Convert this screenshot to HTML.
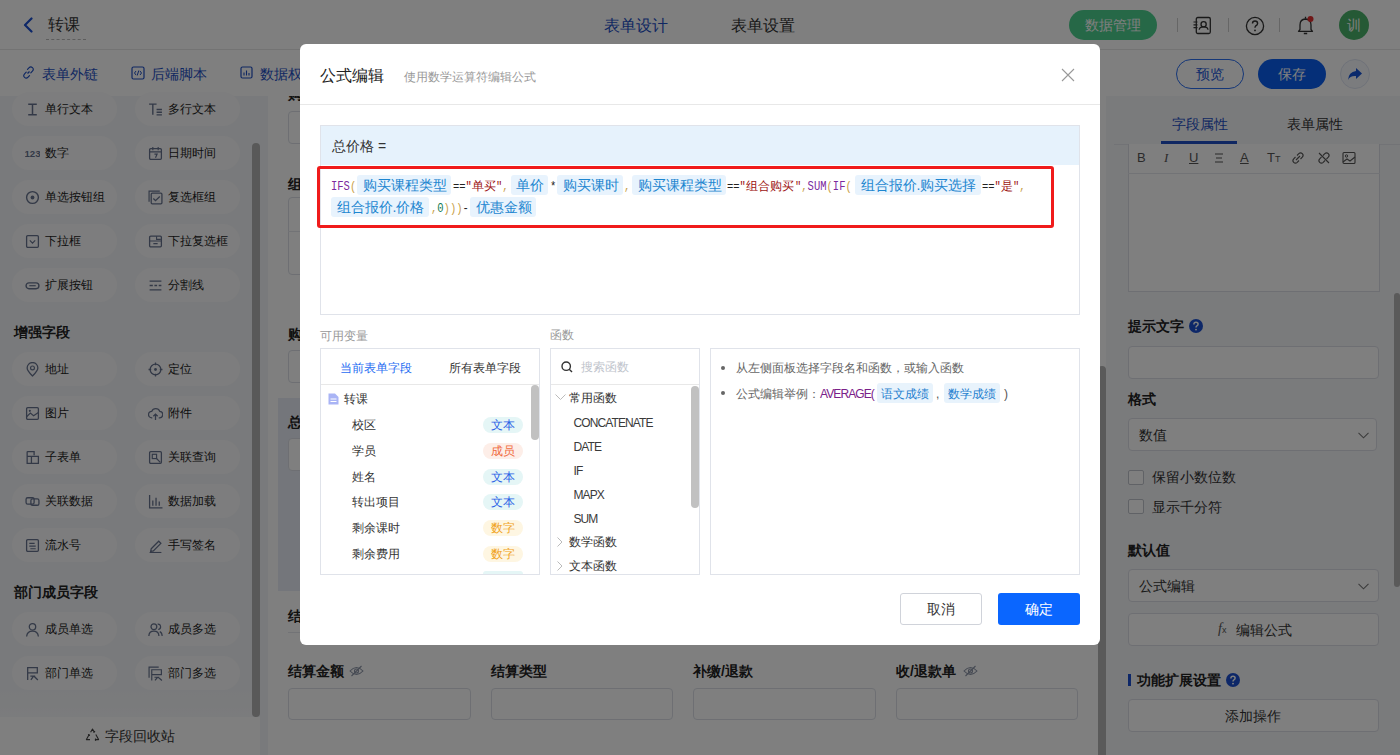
<!DOCTYPE html>
<html><head><meta charset="utf-8">
<style>
*{box-sizing:border-box;margin:0;padding:0}
html,body{width:1400px;height:755px;overflow:hidden;background:#fff;font-family:"Liberation Sans",sans-serif;color:#333;font-size:14px}
.a{position:absolute}
.t{position:absolute;white-space:nowrap;line-height:1}
/* header */
#hdr{left:0;top:0;width:1400px;height:50px;background:#fff;border-bottom:1px solid #e6e6e6}
#tb{left:0;top:50px;width:1400px;height:46px;background:#fff}
#side{left:0;top:96px;width:268px;height:659px;background:#f3f5f8}
.chip{position:absolute;width:105px;height:34px;border-radius:17px;background:#fbfbfc}
.chip .ic{position:absolute;left:13px;top:9.5px;width:15px;height:15px}
.chip .lb{position:absolute;left:33px;top:10px;font-size:12px;line-height:14px;color:#222;white-space:nowrap}
.sec{position:absolute;left:14px;font-size:14px;font-weight:bold;color:#222;line-height:14px}
#canvas{left:268px;top:96px;width:838px;height:659px;background:#fff}
.inp{position:absolute;border:1px solid #dcdfe6;border-radius:4px;background:#fff}
.flb{position:absolute;font-size:14px;font-weight:bold;color:#222;line-height:14px;white-space:nowrap}
#right{left:1106px;top:96px;width:294px;height:659px;background:#f5f6f9}
#ov{left:0;top:0;width:1400px;height:755px;background:rgba(0,0,0,.5)}
#modal{left:300px;top:44px;width:800px;height:601px;background:#fff;border-radius:6px}
</style></head><body>
<div id="hdr" class="a">
 <svg class="a" style="left:22px;top:17px" width="12" height="16" viewBox="0 0 12 16"><path d="M9.5 1.5 L3 8 L9.5 14.5" fill="none" stroke="#1a4fd0" stroke-width="2.2" stroke-linecap="round" stroke-linejoin="round"/></svg>
 <div class="t" style="left:48px;top:17px;font-size:16px;color:#333">转课</div>
 <div class="a" style="left:46px;top:39px;width:40px;border-top:1px dashed #bbb"></div>
 <div class="t" style="left:604px;top:18px;font-size:16px;color:#1e4fc4">表单设计</div>
 <div class="t" style="left:731px;top:18px;font-size:16px;color:#333">表单设置</div>
 <div class="a" style="left:1069px;top:10px;width:88px;height:30px;border-radius:15px;background:#4cd08f"></div>
 <div class="t" style="left:1085px;top:18px;font-size:14px;color:#fff">数据管理</div>
 <div class="a" style="left:1177px;top:18px;width:1px;height:14px;background:#ccc"></div>
 <div class="a" style="left:1228px;top:18px;width:1px;height:14px;background:#ccc"></div>
 <div class="a" style="left:1279px;top:18px;width:1px;height:14px;background:#ccc"></div>
 <svg class="a" style="left:1193px;top:16px" width="20" height="20" viewBox="0 0 20 20"><rect x="3.3" y="1.5" width="14" height="16" rx="1.5" fill="none" stroke="#333" stroke-width="1.3"/><circle cx="10.6" cy="8.2" r="2.6" fill="none" stroke="#333" stroke-width="1.3"/><path d="M6.2 13.8 Q6.5 10.9 10.6 10.9 Q14.7 10.9 15 13.8" fill="none" stroke="#333" stroke-width="1.3"/><path d="M0.5 6h4M0.5 8.8h4M0.5 11.6h4" stroke="#333" stroke-width="1.2"/></svg>
 <svg class="a" style="left:1245px;top:16px" width="20" height="20" viewBox="0 0 20 20"><circle cx="10" cy="10" r="8.6" fill="none" stroke="#333" stroke-width="1.3"/><path d="M7.5 7.6 Q7.5 5 10 5 Q12.6 5 12.6 7.4 Q12.6 9 10.6 10 Q10 10.4 10 11.8" fill="none" stroke="#333" stroke-width="1.4"/><circle cx="10" cy="14.4" r="0.9" fill="#333"/></svg>
 <svg class="a" style="left:1296px;top:15px" width="20" height="21" viewBox="0 0 20 21"><path d="M2.5 16.3 H16.5 L15 14.5 V10 Q15 4.3 9.5 4 Q4 4.3 4 10 V14.5 Z" fill="none" stroke="#333" stroke-width="1.3" stroke-linejoin="round"/><path d="M9.5 1.8v2M7.8 18.5h3.4" stroke="#333" stroke-width="1.3"/><circle cx="14.5" cy="4" r="3" fill="#e02e2e"/></svg>
 <div class="a" style="left:1339px;top:10px;width:30px;height:30px;border-radius:50%;background:#4ab26a"></div>
 <div class="t" style="left:1347px;top:18px;font-size:14px;color:#fff">训</div>
</div>
<div id="tb" class="a">
 <svg class="a" style="left:22px;top:16px" width="13" height="13" viewBox="0 0 13 13"><path d="M5.5 7.5 L7.5 5.5" stroke="#1e4fc4" stroke-width="1.2"/><path d="M4.2 6.2 L2.6 7.8 Q0.8 9.8 2.6 11.4 Q4.3 12.9 6.1 11.1 L7.5 9.7 M8.8 6.8 L10.4 5.2 Q12.2 3.2 10.4 1.6 Q8.7 0.1 6.9 1.9 L5.5 3.3" fill="none" stroke="#1e4fc4" stroke-width="1.2" stroke-linecap="round"/></svg>
 <div class="t" style="left:42px;top:17px;font-size:14px;color:#1e4fc4">表单外链</div>
 <svg class="a" style="left:131px;top:16px" width="14" height="14" viewBox="0 0 14 14"><rect x="1" y="1" width="12" height="12" rx="1.5" fill="none" stroke="#1e4fc4" stroke-width="1.2"/><path d="M5 5 L3.5 7 L5 9 M9 5 L10.5 7 L9 9 M7.8 4.5 L6.2 9.5" fill="none" stroke="#1e4fc4" stroke-width="1"/></svg>
 <div class="t" style="left:151px;top:17px;font-size:14px;color:#1e4fc4">后端脚本</div>
 <svg class="a" style="left:240px;top:16px" width="13" height="13" viewBox="0 0 13 13"><rect x="1" y="1" width="11" height="11" rx="1.5" fill="none" stroke="#1e4fc4" stroke-width="1.2"/><path d="M4 9.5V6.5M6.5 9.5V4.5M9 9.5V7" stroke="#1e4fc4" stroke-width="1.1"/></svg>
 <div class="t" style="left:260px;top:17px;font-size:14px;color:#1e4fc4">数据权限</div>
 <div class="a" style="left:1176px;top:9px;width:68px;height:30px;border-radius:15px;border:1px solid #2a6ef0;background:#fff"></div>
 <div class="t" style="left:1196px;top:17px;font-size:14px;color:#2558d8">预览</div>
 <div class="a" style="left:1258px;top:9px;width:68px;height:30px;border-radius:15px;background:#0a5ef0"></div>
 <div class="t" style="left:1278px;top:17px;font-size:14px;color:#fff">保存</div>
 <div class="a" style="left:1340px;top:9px;width:30px;height:30px;border-radius:50%;background:#f6f8fd;border:1px solid #dfe5f2"></div>
 <svg class="a" style="left:1346px;top:16px" width="18" height="16" viewBox="0 0 18 16"><path d="M10 2 L16 7.5 L10 13 L10 10 Q4 9.5 2 14 Q2.5 6 10 5 Z" fill="#1655d8"/></svg>
</div>
<div id="side" class="a">
 <div class="chip" style="left:12px;top:-4px"><svg class="ic" width="14" height="14" viewBox="0 0 14 14"><path d="M3 2h8M3 12h8M7 2v10" stroke="#67738f" stroke-width="1.4" fill="none"/></svg><div class="lb">单行文本</div></div>
 <div class="chip" style="left:135px;top:-4px"><svg class="ic" width="14" height="14" viewBox="0 0 14 14"><path d="M1 2h7M4.5 2v10M8 7h5M8 9.5h5M8 12h5" stroke="#67738f" stroke-width="1.3" fill="none"/></svg><div class="lb">多行文本</div></div>
 <div class="chip" style="left:12px;top:40px"><svg class="ic" width="14" height="14" viewBox="0 0 14 14"><text x="-0.5" y="10.5" font-size="9" font-weight="bold" font-family="Liberation Sans" fill="#67738f">123</text></svg><div class="lb">数字</div></div>
 <div class="chip" style="left:135px;top:40px"><svg class="ic" width="14" height="14" viewBox="0 0 14 14"><rect x="1.5" y="2.5" width="11" height="10" rx="1" fill="none" stroke="#67738f" stroke-width="1.2"/><path d="M1.5 5.5h11M4.5 1v3M9.5 1v3M6 7.5h2.5L7 11" stroke="#67738f" stroke-width="1.1" fill="none"/></svg><div class="lb">日期时间</div></div>
 <div class="chip" style="left:12px;top:84px"><svg class="ic" width="14" height="14" viewBox="0 0 14 14"><circle cx="7" cy="7" r="5.5" fill="none" stroke="#67738f" stroke-width="1.3"/><circle cx="7" cy="7" r="1.8" fill="#67738f"/></svg><div class="lb">单选按钮组</div></div>
 <div class="chip" style="left:135px;top:84px"><svg class="ic" width="14" height="14" viewBox="0 0 14 14"><path d="M1 11V1h10" stroke="#67738f" stroke-width="1.1" fill="none"/><rect x="3" y="3" width="10" height="10" rx="1" fill="none" stroke="#67738f" stroke-width="1.2"/><path d="M5 8l2 2 4-4" stroke="#67738f" stroke-width="1.2" fill="none"/></svg><div class="lb">复选框组</div></div>
 <div class="chip" style="left:12px;top:128px"><svg class="ic" width="14" height="14" viewBox="0 0 14 14"><rect x="1.5" y="1.5" width="11" height="11" rx="1" fill="none" stroke="#67738f" stroke-width="1.2"/><path d="M4.5 6l2.5 2.5L9.5 6" stroke="#67738f" stroke-width="1.1" fill="none"/></svg><div class="lb">下拉框</div></div>
 <div class="chip" style="left:135px;top:128px"><svg class="ic" width="14" height="14" viewBox="0 0 14 14"><rect x="1.5" y="2" width="11" height="10" rx="1" fill="none" stroke="#67738f" stroke-width="1.2"/><path d="M1.5 6.5h11M5 9h4" stroke="#67738f" stroke-width="1.1" fill="none"/><path d="M8 2v3h4" stroke="#67738f" stroke-width="1" fill="none"/></svg><div class="lb">下拉复选框</div></div>
 <div class="chip" style="left:12px;top:172px"><svg class="ic" width="14" height="14" viewBox="0 0 14 14"><rect x="1" y="4.5" width="12" height="5.5" rx="2.7" fill="none" stroke="#67738f" stroke-width="1.3"/><path d="M4 7.2h6" stroke="#67738f" stroke-width="1.1"/></svg><div class="lb">扩展按钮</div></div>
 <div class="chip" style="left:135px;top:172px"><svg class="ic" width="14" height="14" viewBox="0 0 14 14"><path d="M1.5 3h11M1.5 7h3M6 7h2.5M10 7h2.5M1.5 11h11" stroke="#67738f" stroke-width="1.2" fill="none"/></svg><div class="lb">分割线</div></div>
 <div class="chip" style="left:12px;top:256px"><svg class="ic" width="14" height="14" viewBox="0 0 14 14"><path d="M7 13 Q2 8 2 5.5 A5 5 0 0 1 12 5.5 Q12 8 7 13Z" fill="none" stroke="#67738f" stroke-width="1.2"/><circle cx="7" cy="5.5" r="1.8" fill="none" stroke="#67738f" stroke-width="1.1"/></svg><div class="lb">地址</div></div>
 <div class="chip" style="left:135px;top:256px"><svg class="ic" width="14" height="14" viewBox="0 0 14 14"><circle cx="7" cy="7" r="5" fill="none" stroke="#67738f" stroke-width="1.2"/><circle cx="7" cy="7" r="1.3" fill="#67738f"/><path d="M7 0.5v2.5M7 11v2.5M0.5 7h2.5M11 7h2.5" stroke="#67738f" stroke-width="1.2"/></svg><div class="lb">定位</div></div>
 <div class="chip" style="left:12px;top:300px"><svg class="ic" width="14" height="14" viewBox="0 0 14 14"><rect x="1.5" y="1.5" width="11" height="11" rx="1" fill="none" stroke="#67738f" stroke-width="1.2"/><path d="M1.5 10 L5 6.5 L8 9 L12.5 6" stroke="#67738f" stroke-width="1.1" fill="none"/><circle cx="4.5" cy="4.5" r="1" fill="#67738f"/></svg><div class="lb">图片</div></div>
 <div class="chip" style="left:135px;top:300px"><svg class="ic" width="14" height="14" viewBox="0 0 14 14"><path d="M4 11 H3.5 A3 3 0 0 1 3.5 5 A4 4 0 0 1 11 5 A3 3 0 0 1 10.5 11 H10" fill="none" stroke="#67738f" stroke-width="1.2"/><path d="M7 13V7.5M5 9.5l2-2 2 2" stroke="#67738f" stroke-width="1.2" fill="none"/></svg><div class="lb">附件</div></div>
 <div class="chip" style="left:12px;top:344px"><svg class="ic" width="14" height="14" viewBox="0 0 14 14"><path d="M2 1.5h6.5v3.5M2 1.5v11h10.5V6H6v6.5M2 6h4" stroke="#67738f" stroke-width="1.2" fill="none"/></svg><div class="lb">子表单</div></div>
 <div class="chip" style="left:135px;top:344px"><svg class="ic" width="14" height="14" viewBox="0 0 14 14"><rect x="1.5" y="1.5" width="11" height="11" rx="1" fill="none" stroke="#67738f" stroke-width="1.2"/><rect x="4" y="4" width="4" height="4" fill="none" stroke="#67738f" stroke-width="1.1"/><path d="M7.5 7.5l4 4" stroke="#67738f" stroke-width="1.1"/></svg><div class="lb">关联查询</div></div>
 <div class="chip" style="left:12px;top:388px"><svg class="ic" width="14" height="14" viewBox="0 0 14 14"><rect x="1" y="3.5" width="7.5" height="6" rx="1.5" fill="none" stroke="#67738f" stroke-width="1.2"/><rect x="5.5" y="4.5" width="7.5" height="6" rx="1.5" fill="none" stroke="#67738f" stroke-width="1.2"/></svg><div class="lb">关联数据</div></div>
 <div class="chip" style="left:135px;top:388px"><svg class="ic" width="14" height="14" viewBox="0 0 14 14"><path d="M1.5 1v12h12M4.5 11V6M7.5 11V3.5M10.5 11V7" stroke="#67738f" stroke-width="1.2" fill="none"/></svg><div class="lb">数据加载</div></div>
 <div class="chip" style="left:12px;top:432px"><svg class="ic" width="14" height="14" viewBox="0 0 14 14"><rect x="1.5" y="1.5" width="11" height="11" rx="1" fill="none" stroke="#67738f" stroke-width="1.2"/><path d="M4 5h5M4 7.5h6M5 10h5" stroke="#67738f" stroke-width="1.1"/></svg><div class="lb">流水号</div></div>
 <div class="chip" style="left:135px;top:432px"><svg class="ic" width="14" height="14" viewBox="0 0 14 14"><path d="M3 10 L10 3 L12 5 L5 12 L2.5 12.5Z" fill="none" stroke="#67738f" stroke-width="1.2"/><path d="M1.5 13.5h11" stroke="#67738f" stroke-width="1"/></svg><div class="lb">手写签名</div></div>
 <div class="chip" style="left:12px;top:516px"><svg class="ic" width="14" height="14" viewBox="0 0 14 14"><circle cx="7" cy="4.5" r="3" fill="none" stroke="#67738f" stroke-width="1.2"/><path d="M1.5 13.5 Q2 8.5 7 8.5 Q12 8.5 12.5 13.5" fill="none" stroke="#67738f" stroke-width="1.2"/></svg><div class="lb">成员单选</div></div>
 <div class="chip" style="left:135px;top:516px"><svg class="ic" width="14" height="14" viewBox="0 0 14 14"><circle cx="5.5" cy="4.5" r="2.7" fill="none" stroke="#67738f" stroke-width="1.2"/><path d="M0.8 13 Q1 8.5 5.5 8.5 Q10 8.5 10.2 13" fill="none" stroke="#67738f" stroke-width="1.2"/><path d="M9 2 A2.5 2.5 0 0 1 9.5 7 M11 9 Q13.2 10 13.2 13" fill="none" stroke="#67738f" stroke-width="1.1"/></svg><div class="lb">成员多选</div></div>
 <div class="chip" style="left:12px;top:560px"><svg class="ic" width="14" height="14" viewBox="0 0 14 14"><path d="M2.5 13V1.5H11.5V6.5H2.5M5 9.5H9.5M5.5 13L8 9.5M8.5 9.5L12 13" stroke="#67738f" stroke-width="1.2" fill="none"/></svg><div class="lb">部门单选</div></div>
 <div class="chip" style="left:135px;top:560px"><svg class="ic" width="14" height="14" viewBox="0 0 14 14"><path d="M1 11V1H10" stroke="#67738f" stroke-width="1.1" fill="none"/><path d="M3.5 13.5V3.5H12.5V8H3.5M6 10.5H10.5M6.5 13.5L9 10.5M9.5 10.5L13 13.5" stroke="#67738f" stroke-width="1.1" fill="none"/></svg><div class="lb">部门多选</div></div>
 <div class="sec" style="top:229px">增强字段</div>
 <div class="sec" style="top:489px">部门成员字段</div>
 <div class="a" style="left:252px;top:47px;width:8px;height:574px;border-radius:4px;background:#b3b3b3"></div>
 <div class="a" style="left:0;top:591px;width:252px;height:30px;background:linear-gradient(rgba(255,255,255,0),rgba(255,255,255,.3))"></div>
 <div class="a" style="left:0;top:621px;width:260px;height:38px;background:#fff"></div>
 <svg class="a" style="left:85px;top:632px" width="15" height="14" viewBox="0 0 15 14"><path d="M5.6 4.2 L7.5 1 L9.4 4.2 M10.8 6.5 L13.6 11.6 L10 11.6 M5 11.6 L1.4 11.6 L4.2 6.6" fill="none" stroke="#444" stroke-width="1.1" stroke-linejoin="round"/><path d="M9.4 4.2 L8.2 4 M9.4 4.2 L9.8 3 M10 11.6 L11 10.6 M10 11.6 L11 12.6 M4.2 6.6 L3 6.9 M4.2 6.6 L4.6 7.8" stroke="#444" stroke-width="1.1"/></svg>
 <div class="t" style="left:105px;top:633px;font-size:14px;color:#333">字段回收站</div>
</div>
<div id="canvas" class="a" style="overflow:hidden">
 <div class="flb" style="left:20px;top:-9px;">购买课程</div>
 <div class="inp" style="left:20px;top:15px;width:790px;height:33px;"></div>
 <div class="flb" style="left:20px;top:81px;">组合报价</div>
 <div class="inp" style="left:20px;top:101px;width:790px;height:78px;"></div>
 <div class="a" style="left:20px;top:135px;width:790px;height:1px;background:#e4e7ed"></div>
 <div class="flb" style="left:20px;top:231px;">购买课时</div>
 <div class="inp" style="left:20px;top:254px;width:790px;height:33px;"></div>
 <div class="a" style="left:10px;top:302px;width:810px;height:193px;background:#e8edf7"></div>
 <div class="flb" style="left:20px;top:319px;">总价格</div>
 <div class="inp" style="left:20px;top:342px;width:790px;height:33px;"></div>
 <div class="flb" style="left:20px;top:513px;">结算信息</div>
 <div class="a" style="left:20px;top:536px;width:790px;height:1px;background:#e4e7ed"></div>
 <div class="flb" style="left:20px;top:568px;">结算金额</div>
 <svg class="a" style="left:81px;top:569px" width="15" height="12" viewBox="0 0 15 12"><path d="M1 6 Q7.5 -1 14 6 Q7.5 13 1 6Z" fill="none" stroke="#8a93a6" stroke-width="1.1"/><circle cx="7.5" cy="6" r="2" fill="none" stroke="#8a93a6" stroke-width="1.1"/><path d="M2.5 11 L12.5 1" stroke="#8a93a6" stroke-width="1.1"/></svg>
 <div class="flb" style="left:223px;top:568px;">结算类型</div>
 <div class="flb" style="left:425px;top:568px;">补缴/退款</div>
 <div class="flb" style="left:628px;top:568px;">收/退款单</div>
 <svg class="a" style="left:695px;top:569px" width="15" height="12" viewBox="0 0 15 12"><path d="M1 6 Q7.5 -1 14 6 Q7.5 13 1 6Z" fill="none" stroke="#8a93a6" stroke-width="1.1"/><circle cx="7.5" cy="6" r="2" fill="none" stroke="#8a93a6" stroke-width="1.1"/><path d="M2.5 11 L12.5 1" stroke="#8a93a6" stroke-width="1.1"/></svg>
 <div class="inp" style="left:20px;top:592px;width:183px;height:32px;"></div>
 <div class="inp" style="left:223px;top:592px;width:182px;height:32px;"></div>
 <div class="inp" style="left:425px;top:592px;width:183px;height:32px;"></div>
 <div class="inp" style="left:628px;top:592px;width:182px;height:32px;"></div>
 <div class="a" style="left:830px;top:270px;width:8px;height:400px;border-radius:4px;background:#b5b5b5"></div>
</div>
<div id="right" class="a">
 <div class="t" style="left:65.5px;top:21.0px;font-size:14px;color:#1e4fc4;">字段属性</div>
 <div class="t" style="left:180.5px;top:21.0px;font-size:14px;color:#333;">表单属性</div>
 <div class="a" style="left:8px;top:48px;width:286px;height:1px;background:#e4e7ed"></div>
 <div class="a" style="left:55px;top:45px;width:76px;height:3px;background:#1e4fc4"></div>
 <div class="a" style="left:22px;top:48px;width:252px;height:148px;border:1px solid #dcdfe6;border-top:none;background:#fff"></div>
 <div class="a" style="left:22px;top:77px;width:252px;height:1px;background:#e4e7ed"></div>
 <div class="t" style="left:31px;top:55px;font-size:13px;color:#555">B</div>
 <div class="t" style="left:58px;top:55px;font-size:13px;color:#555;font-style:italic;font-family:'Liberation Serif'">I</div>
 <div class="t" style="left:83px;top:55px;font-size:13px;color:#555;text-decoration:underline">U</div>
 <svg class="a" style="left:108px;top:56px" width="11" height="12" viewBox="0 0 11 12"><path d="M1 2h8M2 6h6M1 10h8" stroke="#555" stroke-width="1.1"/></svg>
 <div class="t" style="left:134px;top:55px;font-size:13px;color:#555;text-decoration:underline">A</div>
 <div class="t" style="left:161px;top:55px;font-size:13px;color:#555">T<span style="font-size:9px">T</span></div>
 <svg class="a" style="left:185px;top:55px" width="14" height="14" viewBox="0 0 14 14"><path d="M6 4.5 L7.8 2.7 Q9.6 1 11.3 2.7 Q13 4.4 11.3 6.2 L9.5 8 M8 9.5 L6.2 11.3 Q4.4 13 2.7 11.3 Q1 9.6 2.7 7.8 L4.5 6 M5 9 L9 5" fill="none" stroke="#555" stroke-width="1.1"/></svg>
 <svg class="a" style="left:211px;top:55px" width="14" height="14" viewBox="0 0 14 14"><path d="M6 4.5 L7.8 2.7 Q9.6 1 11.3 2.7 Q13 4.4 11.3 6.2 L9.5 8 M8 9.5 L6.2 11.3 Q4.4 13 2.7 11.3 Q1 9.6 2.7 7.8 L4.5 6 M2 2 L12 12" fill="none" stroke="#555" stroke-width="1.1"/></svg>
 <svg class="a" style="left:236px;top:55px" width="14" height="14" viewBox="0 0 14 14"><rect x="1" y="1.5" width="12" height="11" rx="1" fill="none" stroke="#555" stroke-width="1.1"/><circle cx="4.5" cy="5" r="1.2" fill="none" stroke="#555" stroke-width="1"/><path d="M1 11 L5 8 L8 10 L13 6" fill="none" stroke="#555" stroke-width="1.1"/></svg>
 <div class="t" style="left:22px;top:223.0px;font-size:14px;color:#222;font-weight:bold">提示文字</div>
 <svg class="a" style="left:83px;top:223px" width="14" height="14" viewBox="0 0 14 14"><circle cx="7" cy="7" r="7" fill="#1a4fd0"/><path d="M4.9 5.4 Q4.9 3.2 7 3.2 Q9.1 3.2 9.1 5.1 Q9.1 6.3 7.9 6.9 Q7 7.4 7 8.6" fill="none" stroke="#fff" stroke-width="1.5"/><circle cx="7" cy="10.6" r="0.95" fill="#fff"/></svg>
 <div class="inp" style="left:22px;top:250px;width:251px;height:33px"></div>
 <div class="t" style="left:22px;top:296.0px;font-size:14px;color:#222;font-weight:bold">格式</div>
 <div class="inp" style="left:22px;top:322px;width:249px;height:33px"></div>
 <div class="t" style="left:33px;top:332.0px;font-size:14px;color:#333;">数值</div>
 <svg class="a" style="left:252px;top:336px" width="11" height="7" viewBox="0 0 11 7"><path d="M0.5 0.8 L5.5 5.8 L10.5 0.8" fill="none" stroke="#777" stroke-width="1.1"/></svg>
 <div class="inp" style="left:22px;top:374px;width:16px;height:15px;border-radius:2px;border-color:#c0c4cc"></div>
 <div class="t" style="left:46px;top:374.0px;font-size:14px;color:#333;">保留小数位数</div>
 <div class="inp" style="left:22px;top:403px;width:16px;height:15px;border-radius:2px;border-color:#c0c4cc"></div>
 <div class="t" style="left:46px;top:403.5px;font-size:14px;color:#333;">显示千分符</div>
 <div class="t" style="left:22px;top:447.0px;font-size:14px;color:#222;font-weight:bold">默认值</div>
 <div class="inp" style="left:22px;top:473px;width:251px;height:33px"></div>
 <div class="t" style="left:33px;top:483.0px;font-size:14px;color:#333;">公式编辑</div>
 <svg class="a" style="left:252px;top:487px" width="11" height="7" viewBox="0 0 11 7"><path d="M0.5 0.8 L5.5 5.8 L10.5 0.8" fill="none" stroke="#777" stroke-width="1.1"/></svg>
 <div class="inp" style="left:22px;top:517px;width:251px;height:33px"></div>
 <div class="t" style="left:112px;top:526px;font-size:14px;color:#555;font-style:italic;font-family:'Liberation Serif'">f<span style="font-size:9px;font-style:normal;font-family:'Liberation Sans'">x</span></div>
 <div class="t" style="left:130px;top:527.0px;font-size:14px;color:#333;">编辑公式</div>
 <div class="a" style="left:22px;top:578px;width:3px;height:12px;background:#1a4fd0"></div>
 <div class="t" style="left:31px;top:577.0px;font-size:14px;color:#222;font-weight:bold">功能扩展设置</div>
 <svg class="a" style="left:120px;top:577px" width="14" height="14" viewBox="0 0 14 14"><circle cx="7" cy="7" r="7" fill="#1a4fd0"/><path d="M4.9 5.4 Q4.9 3.2 7 3.2 Q9.1 3.2 9.1 5.1 Q9.1 6.3 7.9 6.9 Q7 7.4 7 8.6" fill="none" stroke="#fff" stroke-width="1.5"/><circle cx="7" cy="10.6" r="0.95" fill="#fff"/></svg>
 <div class="inp" style="left:22px;top:603px;width:251px;height:33px"></div>
 <div class="t" style="left:119px;top:613.0px;font-size:14px;color:#333;">添加操作</div>
 <div class="a" style="left:288px;top:197px;width:6px;height:294px;border-radius:3px;background:#b5b5b5"></div>
</div>
<div id="ov" class="a"></div>
<div id="modal" class="a">
 <div class="t" style="left:20px;top:24.0px;font-size:16px;color:#222;">公式编辑</div>
 <div class="t" style="left:104px;top:26.5px;font-size:12px;color:#999;">使用数学运算符编辑公式</div>
 <svg class="a" style="left:761px;top:24px" width="14" height="14" viewBox="0 0 14 14"><path d="M1 1L13 13M13 1L1 13" stroke="#999" stroke-width="1.1"/></svg>
 <div class="a" style="left:0px;top:60px;width:800px;height:1px;background:#e8e8e8"></div>
 <div class="a" style="left:20px;top:81px;width:760px;height:190px;border:1px solid #e0e3ea;background:#fff"></div>
 <div class="a" style="left:21px;top:82px;width:758px;height:39px;background:#e6f2fc"></div>
 <div class="t" style="left:32px;top:95.0px;font-size:14px;color:#333;">总价格 =</div>
 <div class="a" style="left:17px;top:122px;width:737px;height:62px;border:3px solid #f01b1b;border-radius:3px"></div>
 <div class="t" style="left:30.5px;top:137.0px;font-family:'Liberation Mono',monospace;font-size:13px;line-height:12px;transform:scaleX(0.8077);transform-origin:0 0"><span style="color:#7b2a9e">IFS</span><span style="color:#c9a14a">(</span></div>
 <div class="a" style="left:57px;top:131px;width:94px;height:20px;background:#e8f3fd;border-radius:3px"></div>
 <div class="t" style="left:62.5px;top:134.0px;font-size:14px;color:#1d86d0">购买课程类型</div>
 <div class="t" style="left:152.5px;top:137.0px;font-family:'Liberation Mono',monospace;font-size:13px;line-height:12px;transform:scaleX(0.8077);transform-origin:0 0"><span style="color:#222">==</span><span style="color:#9c1212">"</span></div>
 <div class="t" style="left:172px;top:136.0px;font-size:12px;color:#9c1212">单买</div>
 <div class="t" style="left:196px;top:137.0px;font-family:'Liberation Mono',monospace;font-size:13px;line-height:12px;transform:scaleX(0.8077);transform-origin:0 0"><span style="color:#9c1212">"</span><span style="color:#c9a14a">,</span></div>
 <div class="a" style="left:210.5px;top:131px;width:37.0px;height:20px;background:#e8f3fd;border-radius:3px"></div>
 <div class="t" style="left:216.0px;top:134.0px;font-size:14px;color:#1d86d0">单价</div>
 <div class="t" style="left:249.5px;top:137.0px;font-family:'Liberation Mono',monospace;font-size:13px;line-height:12px;transform:scaleX(0.8077);transform-origin:0 0"><span style="color:#222">*</span></div>
 <div class="a" style="left:257px;top:131px;width:65.5px;height:20px;background:#e8f3fd;border-radius:3px"></div>
 <div class="t" style="left:262.5px;top:134.0px;font-size:14px;color:#1d86d0">购买课时</div>
 <div class="t" style="left:324px;top:137.0px;font-family:'Liberation Mono',monospace;font-size:13px;line-height:12px;transform:scaleX(0.8077);transform-origin:0 0"><span style="color:#c9a14a">,</span></div>
 <div class="a" style="left:332px;top:131px;width:93.5px;height:20px;background:#e8f3fd;border-radius:3px"></div>
 <div class="t" style="left:337.5px;top:134.0px;font-size:14px;color:#1d86d0">购买课程类型</div>
 <div class="t" style="left:427px;top:137.0px;font-family:'Liberation Mono',monospace;font-size:13px;line-height:12px;transform:scaleX(0.8077);transform-origin:0 0"><span style="color:#222">==</span><span style="color:#9c1212">"</span></div>
 <div class="t" style="left:445.5px;top:136.0px;font-size:12px;color:#9c1212">组合购买</div>
 <div class="t" style="left:494.5px;top:137.0px;font-family:'Liberation Mono',monospace;font-size:13px;line-height:12px;transform:scaleX(0.8077);transform-origin:0 0"><span style="color:#9c1212">"</span><span style="color:#c9a14a">,</span><span style="color:#7b2a9e">SUM</span><span style="color:#c9a14a">(</span><span style="color:#7b2a9e">IF</span><span style="color:#c9a14a">(</span></div>
 <div class="a" style="left:555px;top:131px;width:125.5px;height:20px;background:#e8f3fd;border-radius:3px"></div>
 <div class="t" style="left:560.5px;top:134.0px;font-size:14px;color:#1d86d0">组合报价.购买选择</div>
 <div class="t" style="left:682px;top:137.0px;font-family:'Liberation Mono',monospace;font-size:13px;line-height:12px;transform:scaleX(0.8077);transform-origin:0 0"><span style="color:#222">==</span><span style="color:#9c1212">"</span></div>
 <div class="t" style="left:701px;top:136.0px;font-size:12px;color:#9c1212">是</div>
 <div class="t" style="left:713px;top:137.0px;font-family:'Liberation Mono',monospace;font-size:13px;line-height:12px;transform:scaleX(0.8077);transform-origin:0 0"><span style="color:#9c1212">"</span><span style="color:#c9a14a">,</span></div>
 <div class="a" style="left:31px;top:153px;width:97.5px;height:20px;background:#e8f3fd;border-radius:3px"></div>
 <div class="t" style="left:36.5px;top:156.0px;font-size:14px;color:#1d86d0">组合报价.价格</div>
 <div class="t" style="left:131px;top:159.0px;font-family:'Liberation Mono',monospace;font-size:13px;line-height:12px;transform:scaleX(0.8077);transform-origin:0 0"><span style="color:#c9a14a">,</span><span style="color:#0f7a52">0</span><span style="color:#c9a14a">)))</span><span style="color:#222">-</span></div>
 <div class="a" style="left:170px;top:153px;width:65.5px;height:20px;background:#e8f3fd;border-radius:3px"></div>
 <div class="t" style="left:175.5px;top:156.0px;font-size:14px;color:#1d86d0">优惠金额</div>
 <div class="t" style="left:20px;top:285.5px;font-size:12px;color:#999;">可用变量</div>
 <div class="t" style="left:250px;top:284.5px;font-size:12px;color:#999;">函数</div>
 <div class="a" style="left:20px;top:304px;width:220px;height:227px;border:1px solid #e0e3ea;background:#fff"></div>
 <div class="a" style="left:21px;top:340px;width:218px;height:1px;background:#e8e8e8"></div>
 <div class="t" style="left:40px;top:317.5px;font-size:12px;color:#1f6df2;">当前表单字段</div>
 <div class="t" style="left:148.5px;top:317.5px;font-size:12px;color:#333;">所有表单字段</div>
 <svg class="a" style="left:28px;top:349px" width="11" height="12" viewBox="0 0 11 12"><path d="M0.5 0.5H7L10.5 4V11.5H0.5Z" fill="#a9b4f5"/><path d="M2.5 6h6M2.5 8.5h6" stroke="#fff" stroke-width="1"/></svg>
 <div class="t" style="left:44px;top:349.0px;font-size:12px;color:#333;">转课</div>
 <div class="t" style="left:52px;top:375.0px;font-size:12px;color:#333;">校区</div>
 <div class="a" style="left:183px;top:373.0px;width:40px;height:16.0px;background:#e5f6f6;border-radius:8px"></div>
 <div class="t" style="left:191px;top:375.0px;font-size:12px;color:#2b63e6;">文本</div>
 <div class="t" style="left:52px;top:400.8px;font-size:12px;color:#333;">学员</div>
 <div class="a" style="left:183px;top:398.8px;width:40px;height:16.0px;background:#fdeee8;border-radius:8px"></div>
 <div class="t" style="left:191px;top:400.8px;font-size:12px;color:#f06a3c;">成员</div>
 <div class="t" style="left:52px;top:426.6px;font-size:12px;color:#333;">姓名</div>
 <div class="a" style="left:183px;top:424.6px;width:40px;height:16.0px;background:#e5f6f6;border-radius:8px"></div>
 <div class="t" style="left:191px;top:426.6px;font-size:12px;color:#2b63e6;">文本</div>
 <div class="t" style="left:52px;top:452.4px;font-size:12px;color:#333;">转出项目</div>
 <div class="a" style="left:183px;top:450.4px;width:40px;height:16.0px;background:#e5f6f6;border-radius:8px"></div>
 <div class="t" style="left:191px;top:452.4px;font-size:12px;color:#2b63e6;">文本</div>
 <div class="t" style="left:52px;top:478.20000000000005px;font-size:12px;color:#333;">剩余课时</div>
 <div class="a" style="left:183px;top:476.20000000000005px;width:40px;height:16.0px;background:#fef6e2;border-radius:8px"></div>
 <div class="t" style="left:191px;top:478.20000000000005px;font-size:12px;color:#f0a21a;">数字</div>
 <div class="t" style="left:52px;top:504.0px;font-size:12px;color:#333;">剩余费用</div>
 <div class="a" style="left:183px;top:502.0px;width:40px;height:16.0px;background:#fef6e2;border-radius:8px"></div>
 <div class="t" style="left:191px;top:504.0px;font-size:12px;color:#f0a21a;">数字</div>
 <div class="a" style="left:183px;top:527px;width:40px;height:3px;background:#e5f6f6;border-radius:8px 8px 0 0"></div>
 <div class="a" style="left:231px;top:341px;width:8px;height:55px;background:#c1c1c1;border-radius:4px"></div>
 <div class="a" style="left:250px;top:304px;width:150px;height:227px;border:1px solid #e0e3ea;background:#fff"></div>
 <div class="a" style="left:251px;top:340px;width:148px;height:1px;background:#e8e8e8"></div>
 <svg class="a" style="left:261px;top:317px" width="12" height="12" viewBox="0 0 12 12"><circle cx="5.2" cy="5.2" r="4.2" fill="none" stroke="#333" stroke-width="1.4"/><path d="M8.2 8.2L11 11" stroke="#333" stroke-width="1.4"/></svg>
 <div class="t" style="left:281px;top:317.0px;font-size:12px;color:#c0c4cc;">搜索函数</div>
 <svg class="a" style="left:255px;top:350px" width="11" height="7" viewBox="0 0 11 7"><path d="M0.5 0.5L5.5 5.5L10.5 0.5" fill="none" stroke="#bbb" stroke-width="1"/></svg>
 <div class="t" style="left:269px;top:348.0px;font-size:12px;color:#333;">常用函数</div>
 <div class="t" style="left:273.5px;top:372.5px;font-size:12px;color:#3a3a3a;letter-spacing:-0.9px">CONCATENATE</div>
 <div class="t" style="left:273.5px;top:396.5px;font-size:12px;color:#3a3a3a;letter-spacing:-0.9px">DATE</div>
 <div class="t" style="left:273.5px;top:420.5px;font-size:12px;color:#3a3a3a;letter-spacing:-0.9px">IF</div>
 <div class="t" style="left:273.5px;top:444.5px;font-size:12px;color:#3a3a3a;letter-spacing:-0.9px">MAPX</div>
 <div class="t" style="left:273.5px;top:468.5px;font-size:12px;color:#3a3a3a;letter-spacing:-0.9px">SUM</div>
 <svg class="a" style="left:257px;top:493px" width="6" height="10" viewBox="0 0 6 10"><path d="M0.5 0.5L5 5L0.5 9.5" fill="none" stroke="#bbb" stroke-width="1"/></svg>
 <div class="t" style="left:269px;top:492.0px;font-size:12px;color:#333;">数学函数</div>
 <svg class="a" style="left:257px;top:517px" width="6" height="10" viewBox="0 0 6 10"><path d="M0.5 0.5L5 5L0.5 9.5" fill="none" stroke="#bbb" stroke-width="1"/></svg>
 <div class="t" style="left:269px;top:516.0px;font-size:12px;color:#333;">文本函数</div>
 <div class="a" style="left:391px;top:342px;width:8px;height:122px;background:#c1c1c1;border-radius:4px"></div>
 <div class="a" style="left:410px;top:304px;width:370px;height:227px;border:1px solid #e0e3ea;background:#fff"></div>
 <div class="a" style="left:421px;top:322px;width:4px;height:4px;background:#666;border-radius:50%"></div>
 <div class="t" style="left:436px;top:318.0px;font-size:12px;color:#666;">从左侧面板选择字段名和函数，或输入函数</div>
 <div class="a" style="left:421px;top:347px;width:4px;height:4px;background:#666;border-radius:50%"></div>
 <div class="t" style="left:436px;top:343.5px;font-size:12px;color:#666;">公式编辑举例：</div>
 <div class="t" style="left:520px;top:343.5px;font-size:12px;color:#7a2089;letter-spacing:-0.9px">AVERAGE(</div>
 <div class="a" style="left:577px;top:339px;width:56px;height:20px;background:#e8f3fc;border-radius:3px"></div>
 <div class="t" style="left:581px;top:343.5px;font-size:12px;color:#1f7fcf;">语文成绩</div>
 <div class="t" style="left:636px;top:343.5px;font-size:12px;color:#555;">,</div>
 <div class="a" style="left:644px;top:339px;width:56px;height:20px;background:#e8f3fc;border-radius:3px"></div>
 <div class="t" style="left:648px;top:343.5px;font-size:12px;color:#1f7fcf;">数学成绩</div>
 <div class="t" style="left:704px;top:343.5px;font-size:12px;color:#555;">)</div>
 <div class="a" style="left:600px;top:549px;width:82px;height:32px;border:1px solid #d0d3da;border-radius:3px;background:#fff"></div>
 <div class="t" style="left:627px;top:558.0px;font-size:14px;color:#333;">取消</div>
 <div class="a" style="left:698px;top:549px;width:82px;height:32px;background:#0a66ff;border-radius:3px"></div>
 <div class="t" style="left:725px;top:558.0px;font-size:14px;color:#fff;">确定</div>
</div>
</body></html>
